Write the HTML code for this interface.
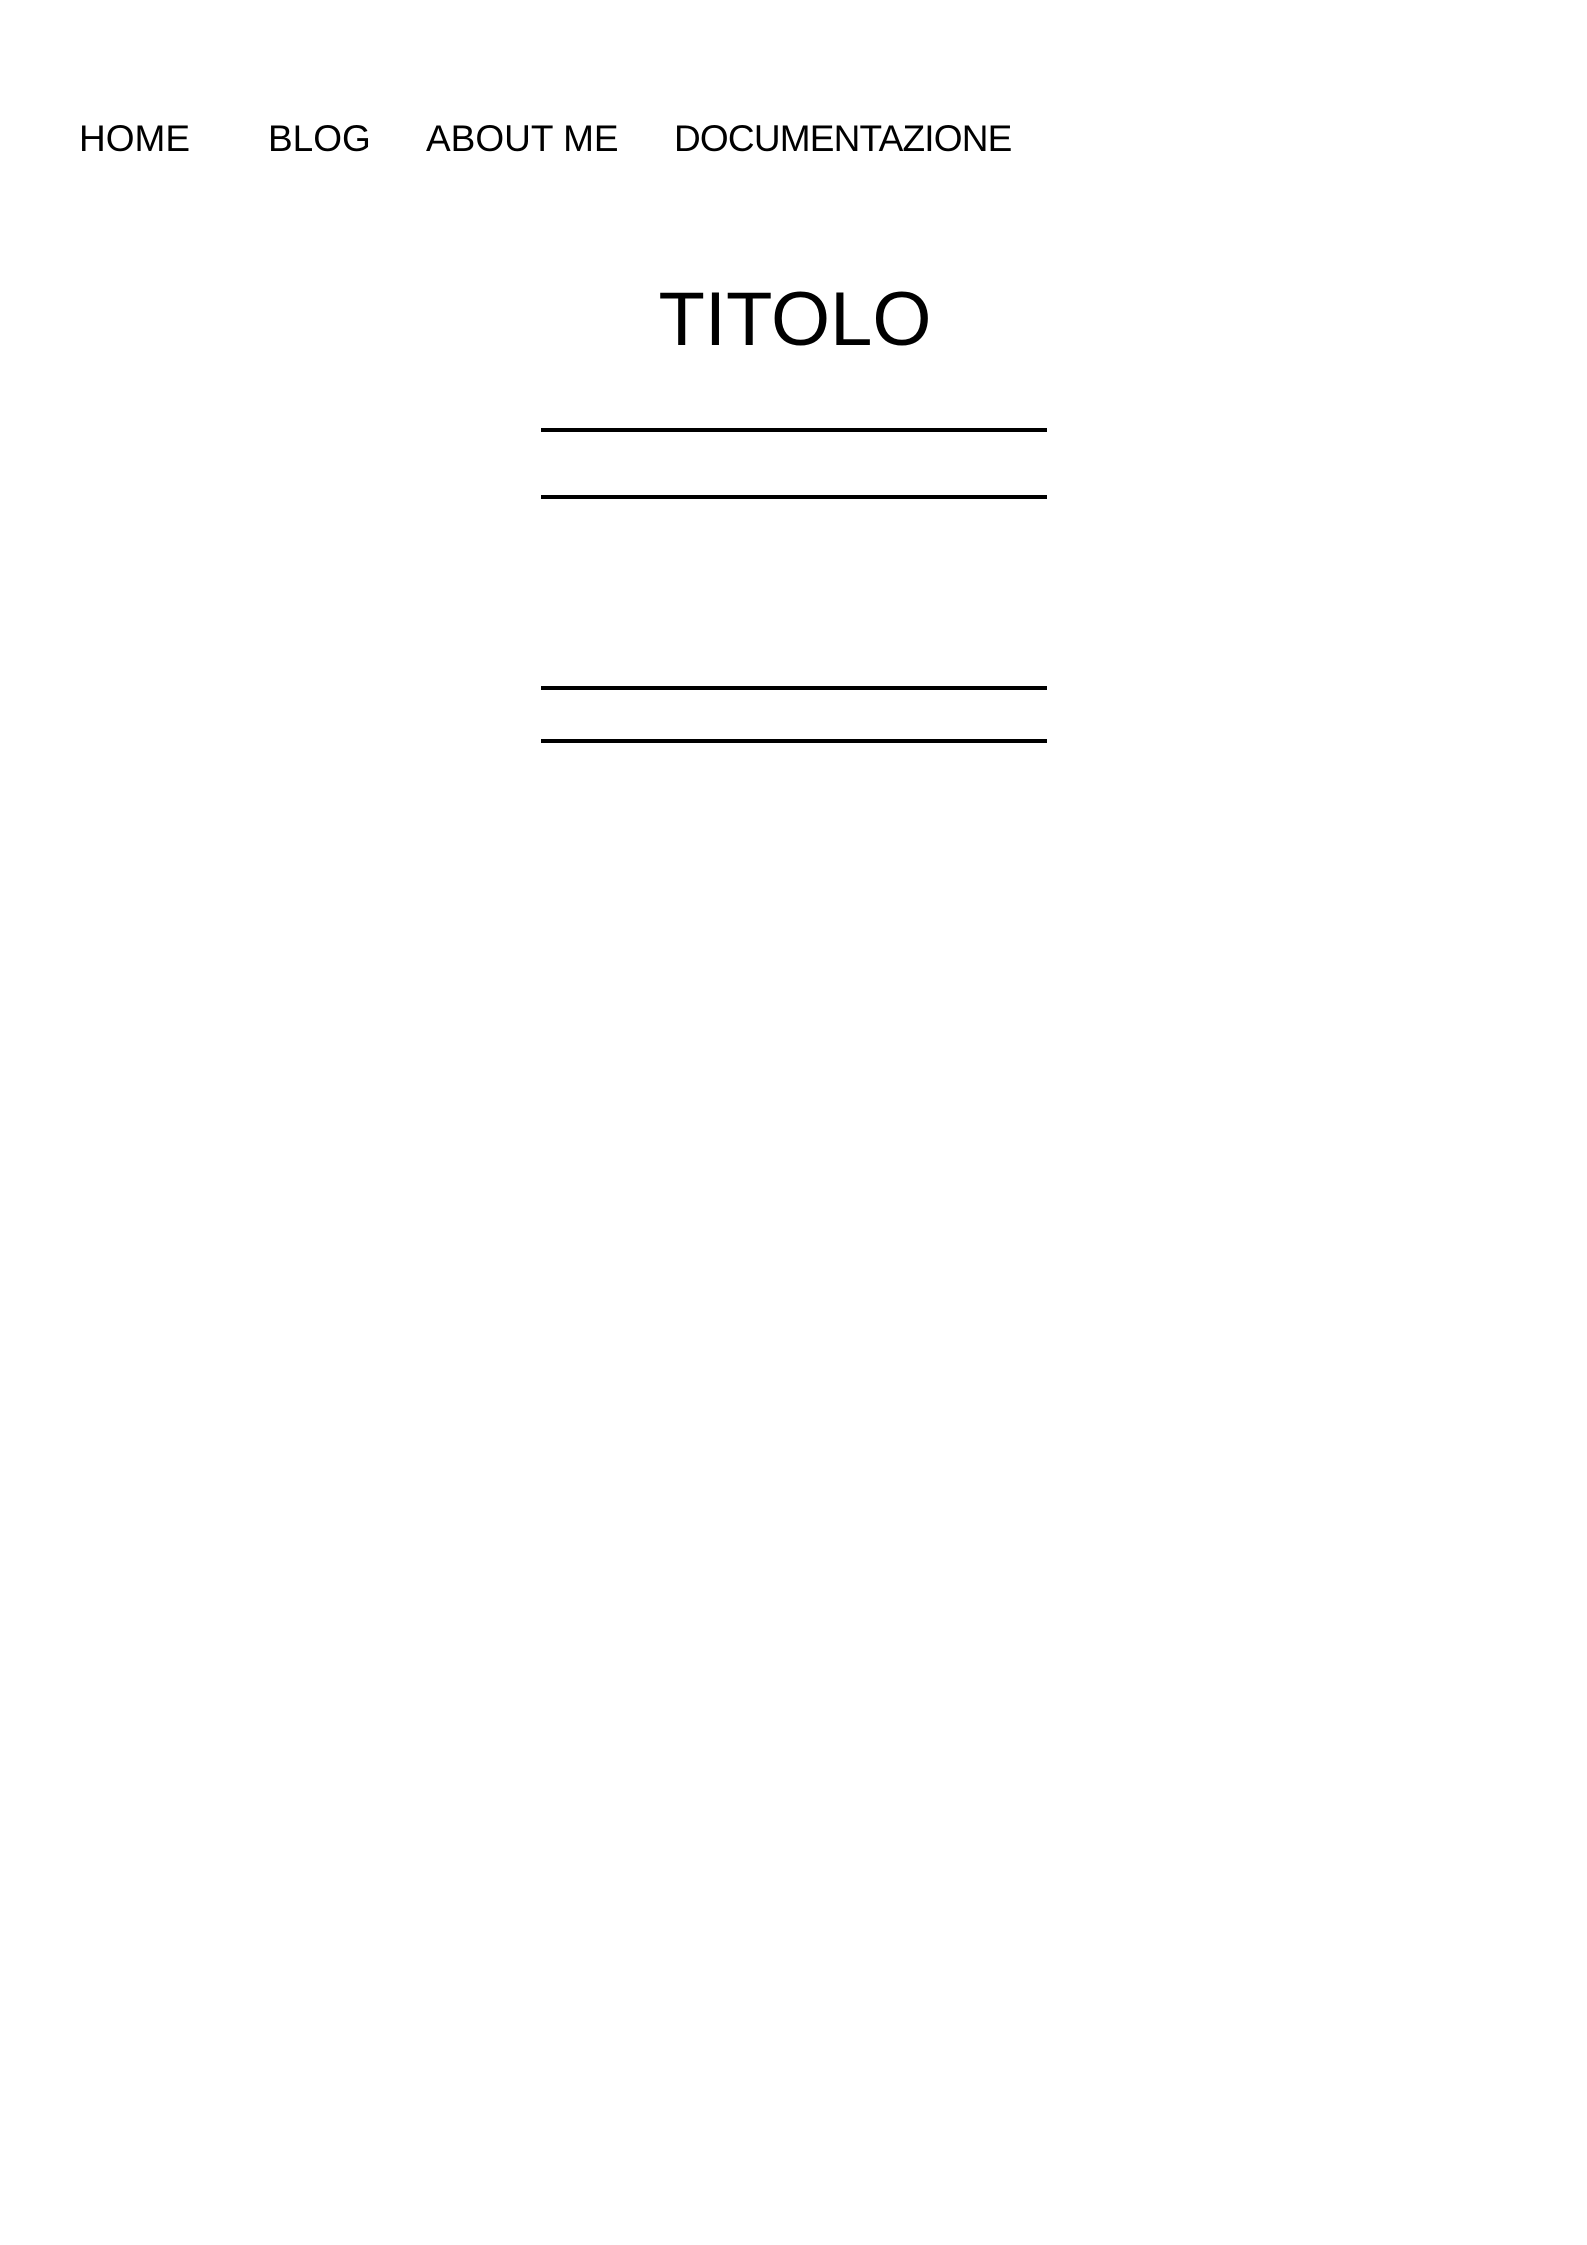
<!DOCTYPE html>
<html><head><meta charset="utf-8"><style>
html,body{margin:0;padding:0;background:#fff;width:1587px;height:2245px;overflow:hidden}
body{position:relative;font-family:"Liberation Sans",sans-serif;color:#000}
.n{position:absolute;top:115px;font-size:37px;line-height:48px;white-space:nowrap}
.t{position:absolute;left:0;width:1590px;text-align:center;top:272px;font-size:76px;line-height:96px}
.l{position:absolute;left:541px;width:506px;height:4px;background:#000}
</style></head><body>
<div class="n" style="left:79px">HOME</div>
<div class="n" style="left:268px">BLOG</div>
<div class="n" style="left:426px">ABOUT ME</div>
<div class="n" style="left:674px;letter-spacing:-0.8px">DOCUMENTAZIONE</div>
<div class="t">TITOLO</div>
<div class="l" style="top:428px"></div>
<div class="l" style="top:495px"></div>
<div class="l" style="top:686px"></div>
<div class="l" style="top:739px"></div>
</body></html>
